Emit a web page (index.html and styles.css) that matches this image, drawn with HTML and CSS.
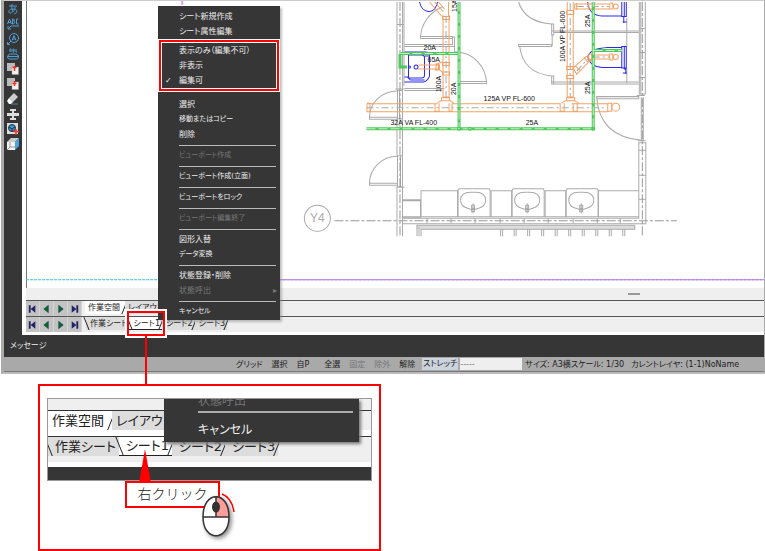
FILE: index.html
```
<!DOCTYPE html>
<html lang="ja">
<head>
<meta charset="utf-8">
<title>シート操作</title>
<link rel="stylesheet" href="styles.css">
</head>
<body>
<main class="figure">
<section class="window">
  <div class="workspace">
    <nav class="tools" aria-label="ツール">
      <button><svg viewBox="0 0 12 12"><g fill="none" stroke="#4d9fd6"><path d="M2 3h8M5 1c-.5 4 0 6 1 8M8 4c0 4-3 6-5 6S1 6 6 6s5 4 1 5"/></g></svg></button>
      <button><svg viewBox="0 0 12 12"><g fill="none" stroke="#4d9fd6"><path d="M.5 6 2.500 1l2 5M1 4.500h3M5.500 1v5h1q3-2 0-3 2-1 0-2zM11.500 1h-2v5h2M1 11l3-3h8M1 8v3h3"/></g></svg></button>
      <button><svg viewBox="0 0 12 12"><g fill="none" stroke="#4d9fd6"><circle cx="7" cy="5" r="4.500"/><path d="m5 7.500 2-5 2 5M5.500 6h3M4 8 .5 11.500M.5 9v2.500H3"/></g></svg></button>
      <button><svg viewBox="0 0 12 12"><g fill="none" stroke="#4d9fd6"><path d="M3 4V1h1v3M6 1v3h1V1zM9 1v3h1M3 6h6q1 0 1 1 2 0 1.500 2-.5 2-2 2H3Q.5 11 .5 9T2 7q0-1 1-1zM1 8.500h10"/></g></svg></button>
      <button><svg viewBox="0 0 12 12"><path fill="#bbb" d="M0 0h8v8H0z"/><path fill="#f4f0f0" stroke="#999" stroke-width=".5" d="M5 4h6.500v7.500H5z"/><path d="M5.500 4.500h4M7.500 3v5" stroke="#e32" stroke-width="1.500" fill="none"/></svg></button>
      <button><svg viewBox="0 0 12 12"><path fill="#bbb" d="M0 0h8v8H0z"/><path fill="#f4f0f0" stroke="#999" stroke-width=".5" d="M5 4h6.500v7.500H5z"/><path d="M5.500 5.500h4M7.500 3v5" stroke="#e32" stroke-width="1.500" fill="none"/></svg></button>
      <button><svg viewBox="0 0 12 12"><path fill="#ccc" d="m7 0 4 4-5 5-4-4z"/><path fill="#fff" d="m2 5 4 4-2 2H2L0 8z"/><path stroke="#48a" d="M4 11h7"/></svg></button>
      <button><svg viewBox="0 0 12 12"><path fill="#ddd" d="M3 1h6v2H7v2h5v3H7v2h2v2H3v-2h2V8H0V5h5V3H3z"/></svg></button>
      <button><svg viewBox="0 0 12 12"><path fill="#ddd" d="M0 0h11v11H0z"/><circle cx="5" cy="5" r="3.500" fill="#369acb" stroke="#234"/><path d="m2 4 3 2 3-2M5 6v3" stroke="#234" fill="none"/><path d="M6 8.500h6M9 6v6" stroke="#e32" stroke-width="1.500"/></svg></button>
      <button><svg viewBox="0 0 12 12"><path fill="#f4f4f4" d="M0 4h8v8H0z"/><path fill="#ccc" d="m0 4 4-4h8L8 4z"/><path fill="#4aa3dc" d="m8 4 4-4v8l-4 4z"/><path d="M3 4v5l-3 3M3 9h5" stroke="#999" fill="none"/></svg></button>
    </nav>

    <div class="sheet">
      <svg class="plan" viewBox="27 1 737 287" preserveAspectRatio="xMinYMin meet" role="img" aria-label="配管図">
        <path d="M27 279.500h131" stroke="#35c5cf" stroke-dasharray="3 1"/>
        <path d="M280 279.500h484" stroke="#8a83e8"/><path d="M280 279.500h484" stroke="#e668e0" stroke-dasharray="2 2"/>
        <path d="M183 1v4" stroke="#e89cf0" stroke-width="2"/>

        <g class="wall">
          <path d="M397.500 2v88M403 2v88M404.500 2v84M397 24.500h8M397.500 118v37M403 118v37M397.500 188v48M403 187v49M398 90.500h5v28h-5zM400 91v27M398 155.500h5v31h-5zM401 156v30M396 89h9M396 187h9"/>
          <path d="M398 91A28 26 0 0 0 370 117.500V119h28v-2h-28M398 156A28 27 0 0 0 370 183.500V185h28v-2h-28"/>
          <path d="M405 44.500h48M405 46.500h50V37h-2v8M421 36.500h32v2h-32zM421 37A34 34 0 0 1 443 7M405 88.500h40M405 90.500h38M455 46v6h4M458 81.500h29v2h-29M458 52A31 32 0 0 1 487 83"/>
          <path d="M519 2Q525 22 552 24h2v11h-2V24M552 31h87M554 32.500h85M552.500 35v11M519 44.500h33v2h-33zM520 46Q523 73 552 76h2v8h-2v-8M552 82h87M554 84h85M627 18v29M627 68v15"/>
          <path d="M639.500 2v92h6V2M641 2v92M639 28.500h7M639 52.500h7M639 77.500h7M637 95.500h8M597 96.500h42v2h-42zM597 98Q600 136 641 140M641.500 97v43h2V97M638 140.500h8"/>
          <path d="M639 142.500h7v81H403M639 142v76H403M639 150h7M639 175h7M639 199h7"/>
          <path d="M403 200.500h18v17h-18zM403 199.500h18M421.500 217v-26.500H458V217M491.500 217v-26.500H512V217M545.500 217v-26.500H566V217M598.500 217v-26.500H639"/>
          <path d="M458.500 217v-27l1-1.500h30l1 1.500v27M512.500 217v-27l1-1.500h30l1 1.500v27M566.500 217v-27l1-1.500h30l1 1.500v27M403 216.500h236M427.500 218v5M451.500 218v5M475.500 218v5M500.500 218v5M524.500 218v5M548.500 218v5M573.500 218v5M597.500 218v5M620.500 218v5"/>
          <path d="M461 200q0-8 10-8h5q10 0 10 8 0 6-7 8l-3 1h-5l-3-1q-7-2-7-8zM473.500 203v10M472 205h3v3h-3zM472 209.500h3v2h-3z"/>
          <path d="M515 200q0-8 10-8h5q10 0 10 8 0 6-7 8l-3 1h-5l-3-1q-7-2-7-8zM527.500 203v10M526 205h3v3h-3zM526 209.500h3v2h-3z"/>
          <path d="M569 200q0-8 10-8h5q10 0 10 8 0 6-7 8l-3 1h-5l-3-1q-7-2-7-8zM581.500 203v10M580 205h3v3h-3zM580 209.500h3v2h-3z"/>
          <path class="band" d="M417 227H635"/>
          <path d="M417.500 236v-11H635v4H421.500v7M419.500 236v-9M501 229v7M503 229v7M514.500 229v7M516.500 229v7M528 229v7M530 229v7M542 229v7M544 229v7M555.500 229v7M557.500 229v7M569 229v7M571 229v7M582.500 229v7M584.500 229v7M596 229v7M598 229v7M609.500 229v7M611.500 229v7M623 229v7M625 229v7"/>
          <circle cx="318" cy="218" r="13"/>
          <path class="axis" d="M335 220.500h342M400.500 2v234M642.500 2v234"/>
        </g>

        <g class="fixture">
          <path d="M420 2q2 9 9 9.500T438 2"/>
          <path d="M405 52h21q4 0 4 4v20q-2 5-6 6h-19M409 55h13q3 0 3 3v17q0 3-3 3h-13zM405 77h3l3 3h14M425 56h5"/>
          <circle cx="416.500" cy="67" r="2"/><circle cx="410" cy="67" r="1"/>
          <path d="M622 47.500h-14q-18 1-20 9.500 2 9 14 10.500h20M622 46.500h4.500V68H622zM624.500 46v22M624 69h2v5M623 73h4"/>
          <path d="M588 2q1 13 14 14h20M622 2v14.500h4.500V2M624.500 2v15M624 17v6M623 22h4"/>
        </g>

        <g class="drain">
          <path d="M367.500 103.500v8H608v-8H572M367.500 103.500H438M453 103.500h107M367.500 103h3v8M435.500 103v8h4v-8M449.500 103v8h3v-8M560.500 103v8h4v-8M573.500 103v8h4v-8M608 103h4v8h-4"/>
          <circle cx="616" cy="107" r="4"/>
          <path d="M443.500 15v82h6V15M443 16.500h7v3h-7zM443 62.500h7v3h-7zM443 72h7v3h-7zM442 97.500h8v3h-8zM442 100l-4 3M450 100l4 3M430 2l12 14M435 2l9 10M439 2l6 7M449 2v14"/>
          <path d="M567.500 2v95h6V2M567 10.500h7v4h-7zM567 66.500h7v3h-7zM567 75.500h7v3h-7zM567 97.500h8v3h-8zM567 100l-5 3M574 100l5 3"/>
          <path d="M575 4h35v5h-35zM577 3v7M589 4v5M610 3h3v6h-3M573 68l14-12 4 4-14 14zM576 66l4 4M584 57l4 5M589 54h3v7h-3zM592 55h18v4h-18M610 54h3v6h-3zM419 65h21v4h-21M436 64h3v6h-3l1-6 6-2M439 69l5 4"/>
          <circle cx="616" cy="6.500" r="2.500"/><circle cx="616" cy="57" r="2.500"/>
          <path class="center" d="M367 107.500h240M446.500 16v82M570.500 3v94M577 6.500h32M577 71l11-12M593 57h17"/>
        </g>

        <g class="water">
          <path d="M459.500 2v126M401 53.500h58M400.500 54v13h7M367 128.500H593.500V2M594 50.500h28"/>
          <path class="water-core" d="M459.500 2v126M401 53.500h58M367 128.500H593.500V2M594 50.500h28"/>
          <circle cx="459.500" cy="128.500" r="1.500"/><circle cx="470" cy="128.500" r="1.500"/><circle cx="593.500" cy="128.500" r="1.500"/>
        </g>

        <g class="dimension">
          <text x="424" y="50">20A</text><text x="428" y="62">65A</text>
          <text x="391" y="125">32A VA FL-400</text><text x="484" y="101">125A VP FL-600</text><text x="526" y="125">25A</text>
          <text transform="translate(441 92) rotate(-90)">100A</text><text transform="translate(456 95) rotate(-90)">20A</text><text transform="translate(457 12) rotate(-90)">15A</text>
          <text transform="translate(565 62) rotate(-90)">100A VP FL-600</text><text transform="translate(590 27) rotate(-90)">25A</text><text transform="translate(590 94) rotate(-90)">25A</text>
        </g>
        <text class="axis-name" x="318" y="222">Y4</text>
      </svg>

      <div class="scroll"><span></span></div>
      <div class="tabrow">
        <span class="nav">
          <button aria-label="先頭"><svg viewBox="0 0 14 14"><path d="M4 3v8" stroke="#226" stroke-width="2"/><path d="m10 3-5 4 5 4z" fill="#226"/></svg></button>
          <button aria-label="前"><svg viewBox="0 0 14 14"><path d="m9 3-5 4 5 4z" fill="#0a6a2c" stroke="#226" stroke-width=".5"/></svg></button>
          <button aria-label="次"><svg viewBox="0 0 14 14"><path d="m5 3 5 4-5 4z" fill="#0a6a2c" stroke="#226" stroke-width=".5"/></svg></button>
          <button aria-label="末尾"><svg viewBox="0 0 14 14"><path d="M10 3v8" stroke="#226" stroke-width="2"/><path d="m4 3 5 4-5 4z" fill="#226"/></svg></button>
        </span>
        <div class="tabs upper"><button class="tab on">作業空間</button><button class="tab">レイアウト</button></div>
      </div>
      <div class="tabrow">
        <span class="nav">
          <button aria-label="先頭"><svg viewBox="0 0 14 14"><path d="M4 3v8" stroke="#226" stroke-width="2"/><path d="m10 3-5 4 5 4z" fill="#226"/></svg></button>
          <button aria-label="前"><svg viewBox="0 0 14 14"><path d="m9 3-5 4 5 4z" fill="#0a6a2c" stroke="#226" stroke-width=".5"/></svg></button>
          <button aria-label="次"><svg viewBox="0 0 14 14"><path d="m5 3 5 4-5 4z" fill="#0a6a2c" stroke="#226" stroke-width=".5"/></svg></button>
          <button aria-label="末尾"><svg viewBox="0 0 14 14"><path d="M10 3v8" stroke="#226" stroke-width="2"/><path d="m4 3 5 4-5 4z" fill="#226"/></svg></button>
        </span>
        <div class="tabs lower"><button class="tab">作業シート</button><button class="tab on">シート1</button><button class="tab">シート2</button><button class="tab">シート3</button></div>
      </div>
      <div class="foot"></div>
    </div>
  </div>
  <div class="message">メッセージ</div>
  <footer class="status">
    <button>グリッド</button><button>選択</button><button class="self">自P</button><button>全選</button><button disabled>固定</button><button disabled>除外</button><button>解除</button><button class="stretch">ストレッチ</button>
    <input aria-label="入力" value="-----">
    <span class="size">サイズ: A3横スケール: 1/30</span><span>カレントレイヤ: (1-1)NoName</span>
  </footer>

  <div class="menu" role="menu">
    <button>シート新規作成</button><button>シート属性編集</button>
    <div class="marked"><button>表示のみ（編集不可）</button><button>非表示</button><button class="checked">編集可</button></div>
    <button>選択</button><button class="kana">移動またはコピー</button><button>削除</button>
    <hr><button class="kana" disabled>ビューポート作成</button>
    <hr><button class="kana">ビューポート作成(立面)</button>
    <hr><button class="kana">ビューポートをロック</button>
    <hr><button class="kana" disabled>ビューポート編集終了</button>
    <hr><button>図形入替</button><button class="kana">データ変換</button>
    <hr><button>状態登録・削除</button><button class="more" disabled>状態呼出</button>
    <hr><button class="kana">キャンセル</button>
  </div>
  <div class="target"></div>
</section>

<section class="detail">
  <div class="closeup">
    <div class="tabs big upper"><button class="tab on">作業空間</button><button class="tab">レイアウト</button></div>
    <div class="tabs big lower"><button class="tab">作業シート</button><button class="tab on">シート1</button><button class="tab">シート2</button><button class="tab">シート3</button></div>
    <div class="dark"></div>
    <div class="bigmenu"><button class="cut" disabled>状態呼出</button><hr><button>キャンセル</button></div>
  </div>
  <div class="callout">
    <svg class="pointer" viewBox="0 0 12 34"><path fill="red" d="M6 0 12 34H0z"/></svg>
    <span>右クリック</span>
    <svg class="mouse" viewBox="0 0 36 52">
      <g class="mouse-body"><path d="M2 24C2-3 28-3 28 24c0 25-26 25-26 0z" fill="#fff"/><path d="M15 4q13 0 13 20H15z" fill="#ff9c9c"/><path d="M2 24C2-3 28-3 28 24c0 25-26 25-26 0zM2 24h26M15 4v20" fill="none" stroke="#333" stroke-width="1.500"/><ellipse cx="15" cy="14" rx="4" ry="5.500" fill="#333"/></g>
      <path d="M21 1q10 4 12 18" fill="none" stroke="red" stroke-width="1.500"/>
    </svg>
  </div>
</section>
</main>
</body>
</html>
```
FILE: styles.css
```
* { box-sizing: border-box; }
body {
  margin: 0;
  background: #fff;
  color: #222;
  font: 8px/15px "DejaVu Sans", "Noto Sans CJK JP", sans-serif;
  font-feature-settings: "palt";
}
button, input {
  margin: 0;
  padding: 0;
  border: 0;
  background: none;
  color: inherit;
  font: inherit;
  font-feature-settings: inherit;
  white-space: nowrap;
}
svg { display: block; }
.figure { overflow: hidden; }

/* application window */
.window {
  position: relative;
  margin-left: 1px;
  border: 1px solid #aaa;
  border-top-color: #ccc;
  border-bottom: 2px solid #bbb;
  border-left: 3px solid #aaa;
  background: #363636;
}
.workspace { display: flex; }
.tools {
  flex: none;
  width: 18px;
  padding: 0 3px;
}
.tools button { display: block; width: 12px; height: 15px; }
.tools svg { width: 12px; height: 12px; }
.sheet {
  flex: 1;
  min-width: 0;
  background: #fff;
  border-left: 4px solid #fff;
  box-shadow: inset 1px 0 #777;
}
.plan { width: 100%; height: auto; font: 7px "Liberation Sans", sans-serif; }
.plan g { fill: none; stroke-width: 1; }
.wall { stroke: #aaa; }
.wall .axis { stroke: #999; stroke-dasharray: 9 2 3 2; }
.wall .band { stroke: #ddd; stroke-width: 4; }
.fixture { stroke: #2a2aee; }
.drain { stroke: #f5a164; }
.drain .center { stroke: #aaa; stroke-dasharray: 7 3 2 3; }
.water { stroke: #4fc95b; }
.water path { stroke-width: 3; }
.water .water-core { stroke: #c8f0ca; stroke-width: 1; stroke-dasharray: 9 3; }
.plan .dimension { fill: #111; stroke: none; }
.axis-name { fill: #aaa; font-size: 12px; text-anchor: middle; }

.scroll {
  display: flex;
  justify-content: flex-end;
  height: 12px;
  padding: 5px 124px 0 0;
  background: #efefef;
}
.scroll span { width: 12px; height: 2px; background: #999; }
.tabrow {
  display: flex;
  height: 16px;
  border-top: 1px solid #555;
  background: #efefef;
}
.nav { display: flex; flex: none; width: 56px; height: 15px; background: #c3c3c3; }
.nav button { width: 14px; border-right: 1px solid #d4d4d4; }
.nav svg { width: 13px; height: 14px; }
.tabs { display: flex; }
.tab {
  position: relative;
  height: 13px;
  padding: 0 4px 0 3px;
  background: #ddd;
  color: #222;
  line-height: 14px;
}
.tab::after {
  content: "";
  position: absolute;
  top: 0;
  right: 0;
  bottom: 0;
  border-right: 1px solid #222;
  transform: skewX(-22deg);
}
.tab.on { background: #fff; }
.lower .tab:first-child::before, .lower .tab.on::before {
  content: "";
  position: absolute;
  top: 0;
  left: 0;
  bottom: 0;
  border-left: 1px solid #222;
  transform: skewX(22deg);
}
.lower .tab:first-child::after { display: none; }
.lower { padding-left: 4px; }
.lower .tab { padding: 0 2px 0 4px; }
.lower .tab.on { border-bottom: 1px solid #222; }
.upper { padding-left: 3px; }
.upper .tab { padding: 0 5px 0 3px; }
.foot { height: 3px; background: #fff; }
.message { height: 22px; padding: 3px 6px; color: #eee; }

.status {
  display: flex;
  gap: 9px;
  height: 15px;
  padding-left: 232px;
  background: #a9a9a9;
  border-bottom: 1px solid #777;
  line-height: 15px;
  white-space: nowrap;
}
.status button:disabled { color: #777; }
.status .stretch { margin: 1px -7px 1px -2px; padding: 0 1px; background: #ccd3dd; line-height: 12px; }
.status .self { margin-right: 6px; }
.status input { flex: 0 1 62px; min-width: 0; height: 12px; margin: 1px -6px 0 0; background: #efefef; color: #777; }
.status .size { margin-right: -2px; }

/* sheet context menu */
.menu {
  position: absolute;
  top: 5px;
  left: 154px;
  width: 122px;
  padding: 3px 0 1px;
  background: #363636;
  box-shadow: 2px 2px 2px #8888;
  color: #eee;
}
.menu button {
  position: relative;
  display: block;
  width: 100%;
  height: 15px;
  padding-left: 21px;
  text-align: left;
}
.menu .kana { font-size: 7px; }
.menu button:disabled { color: #777; }
.menu hr { height: 1px; margin: 3px 4px 2px 21px; border: 0; background: #bbb; }
.marked {
  margin: 1px 1px 6px;
  padding: 1px 0;
  border: 2px solid red;
  outline: 1px solid #fff;
  box-shadow: inset 0 0 0 1px #fff;
}
.marked button { padding-left: 18px; }
.checked::before { content: "✓"; position: absolute; left: 4px; }
.more::after { content: "▸"; position: absolute; right: 3px; }
.target {
  position: absolute;
  top: 310px;
  left: 123px;
  width: 38px;
  height: 25px;
  border: 2px solid red;
  outline: 2px solid #fff;
}
.target::after {
  content: "";
  position: absolute;
  top: 23px;
  left: 16px;
  width: 2px;
  height: 50px;
  background: red;
}

/* enlarged view */
.detail {
  width: 343px;
  max-width: 100%;
  height: 167px;
  margin: 10px 0 0 38px;
  padding: 12px 7px;
  border: 2px solid red;
}
.closeup {
  position: relative;
  overflow: hidden;
  height: 83px;
  padding-top: 11px;
  border: 1px solid #999;
  background: #efefef;
  font-size: 13px;
}
.big { border-top: 1px solid #333; height: 26px; }
.big .tab { height: 19px; line-height: 18px; }
.big.upper { padding: 0; background: linear-gradient(#efefef 19px, #fff 0); }
.big.upper .tab { padding: 0 8px 0 4px; }
.big.lower { height: 31px; padding: 0; border-bottom: 5px solid #fff; }
.big.lower .tab { padding: 0 3px 0 7px; }
.dark { height: 14px; background: #363636; }
.bigmenu {
  position: absolute;
  top: 0;
  left: 116px;
  width: 195px;
  height: 43px;
  padding-left: 34px;
  background: #363636;
  box-shadow: 2px 2px 3px #777;
  color: #eee;
  font-size: 12px;
}
.bigmenu button { display: block; height: 20px; line-height: 20px; }
.bigmenu .cut { height: 20px; margin-top: -8px; line-height: 14px; color: #777; }
.bigmenu hr { height: 2px; margin: 0 6px 7px 0; border: 0; background: #aaa; }
.callout {
  position: relative;
  width: 95px;
  height: 27px;
  margin: 0 0 0 78px;
  border: 2px solid red;
  background: #fff;
  font: 300 14px/20px "Noto Sans CJK JP", sans-serif;
  font-feature-settings: normal;
  text-align: center;
}
.pointer { position: absolute; top: -34px; left: 12px; width: 12px; height: 34px; }
.mouse { position: absolute; top: 10px; left: 74px; width: 36px; height: 52px; }
.mouse-body { filter: drop-shadow(2px 2px 2px #888); }
```
